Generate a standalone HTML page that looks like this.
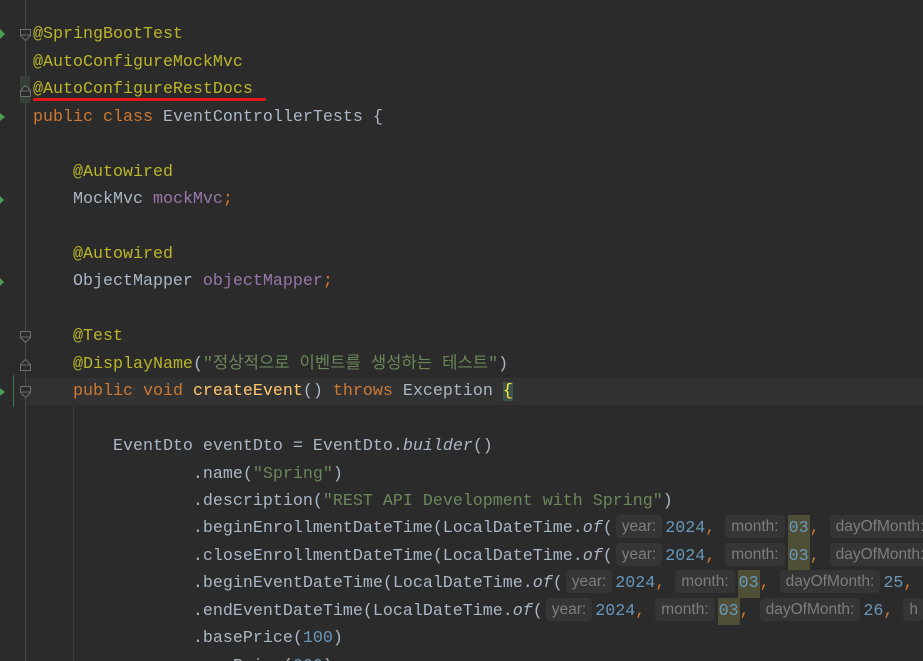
<!DOCTYPE html>
<html><head><meta charset="utf-8">
<style>
html,body{margin:0;padding:0;overflow:hidden;height:661px;}
body{width:923px;background:#2b2b2b;position:relative;font-family:"Liberation Mono","Noto Sans CJK KR",monospace;font-size:16.67px;color:#a9b7c6;}
.l{position:absolute;left:33px;height:27.45px;line-height:27.45px;white-space:pre;}
.a{color:#bbb529}.k{color:#cc7832}.f{color:#9876aa}.s{color:#6a8759}.n{color:#6897bb}.m{color:#ffc66d}.i{font-style:italic}
.h{display:inline-block;font-family:"Liberation Sans","DejaVu Sans",sans-serif;font-size:15.5px;color:#7d7d7d;background:#353535;border-radius:4px;padding:0 6px;line-height:23px;margin:0 3px 0 3px;vertical-align:1px;}
.g{margin-left:10px}
.hl{background:#4f4e36;display:inline-block;padding:0 1px;}
.cur{position:absolute;left:26px;right:0;top:377.8px;height:27.45px;background:#323232;}
.gl{position:absolute;left:25px;top:0;width:1px;height:661px;background:#474747;}
.ig{position:absolute;width:1px;background:#393939;}
</style></head><body>
<div class="cur"></div>
<div class="gl"></div>
<div style="position:absolute;left:13px;top:375px;width:1px;height:32px;background:#3d7a52"></div>
<div style="position:absolute;left:20px;top:76px;width:10px;height:27px;background:#344134"></div>
<div class="ig" style="left:73px;top:405px;height:256px"></div>
<svg style="position:absolute;left:0;top:0" width="33" height="661">
<g fill="#2b2b2b" stroke="#6e6e6e" stroke-width="1">
<path d="M20.5 29.5h10v6l-5 5l-5-5z"/><path d="M21 35h9"/>
<path d="M20.5 96.5h10v-6l-5-5l-5 5z"/><path d="M21 91h9"/>
<path d="M20.5 331.5h10v6l-5 5l-5-5z"/><path d="M21 337h9"/>
<path d="M20.5 370.5h10v-6l-5-5l-5 5z"/><path d="M21 365h9"/>
<path d="M20.5 386.5h10v6l-5 5l-5-5z"/><path d="M21 392h9"/>
</g>
<g fill="#499c54"><path d="M0 29l5 5l-5 5z"/><path d="M0 113l5 4l-5 4z"/><path d="M0 388l5 4l-5 4z"/><path d="M0 196l4 4l-4 4z"/><path d="M0 278l4 4l-4 4z"/></g>
</svg>
<div style="position:absolute;left:33px;top:98px;width:233px;height:3px;background:#e01818;border-radius:2px"></div>

<div class="l" style="top:21.3px"><span class="a">@SpringBootTest</span></div>
<div class="l" style="top:48.8px"><span class="a">@AutoConfigureMockMvc</span></div>
<div class="l" style="top:76.2px"><span class="a">@AutoConfigureRestDocs</span></div>
<div class="l" style="top:103.6px"><span class="k">public class </span>EventControllerTests {</div>
<div class="l" style="top:158.5px">    <span class="a">@Autowired</span></div>
<div class="l" style="top:186px">    MockMvc <span class="f">mockMvc</span><span class="k">;</span></div>
<div class="l" style="top:240.9px">    <span class="a">@Autowired</span></div>
<div class="l" style="top:268.3px">    ObjectMapper <span class="f">objectMapper</span><span class="k">;</span></div>
<div class="l" style="top:323.2px">    <span class="a">@Test</span></div>
<div class="l" style="top:350.7px">    <span class="a">@DisplayName</span>(<span class="s">"정상적으로 이벤트를 생성하는 테스트"</span>)</div>
<div class="l" style="top:378.1px">    <span class="k">public void </span><span class="m">createEvent</span>() <span class="k">throws </span>Exception <span style="background:#3b514d;color:#ffef28">{</span></div>
<div class="l" style="top:433px">        EventDto eventDto = EventDto.<span class="i">builder</span>()</div>
<div class="l" style="top:460.5px">                .name(<span class="s">"Spring"</span>)</div>
<div class="l" style="top:487.9px">                .description(<span class="s">"REST API Development with Spring"</span>)</div>
<div class="l" style="top:515.4px">                .beginEnrollmentDateTime(LocalDateTime.<span class="i">of</span>(<span class="h">year:</span><span class="n">2024</span><span class="k">,</span><span class="h g">month:</span><span class="n hl">03</span><span class="k">,</span><span class="h g">dayOfMonth:</span></div>
<div class="l" style="top:542.8px">                .closeEnrollmentDateTime(LocalDateTime.<span class="i">of</span>(<span class="h">year:</span><span class="n">2024</span><span class="k">,</span><span class="h g">month:</span><span class="n hl">03</span><span class="k">,</span><span class="h g">dayOfMonth:</span></div>
<div class="l" style="top:570.2px">                .beginEventDateTime(LocalDateTime.<span class="i">of</span>(<span class="h">year:</span><span class="n">2024</span><span class="k">,</span><span class="h g">month:</span><span class="n hl">03</span><span class="k">,</span><span class="h g">dayOfMonth:</span><span class="n">25</span><span class="k">,</span></div>
<div class="l" style="top:597.7px">                .endEventDateTime(LocalDateTime.<span class="i">of</span>(<span class="h">year:</span><span class="n">2024</span><span class="k">,</span><span class="h g">month:</span><span class="n hl">03</span><span class="k">,</span><span class="h g">dayOfMonth:</span><span class="n">26</span><span class="k">,</span><span class="h g">h</span></div>
<div class="l" style="top:625.1px">                .basePrice(<span class="n">100</span>)</div>
<div class="l" style="top:652.6px">                .maxPrice(<span class="n">200</span>)</div>
</body></html>
